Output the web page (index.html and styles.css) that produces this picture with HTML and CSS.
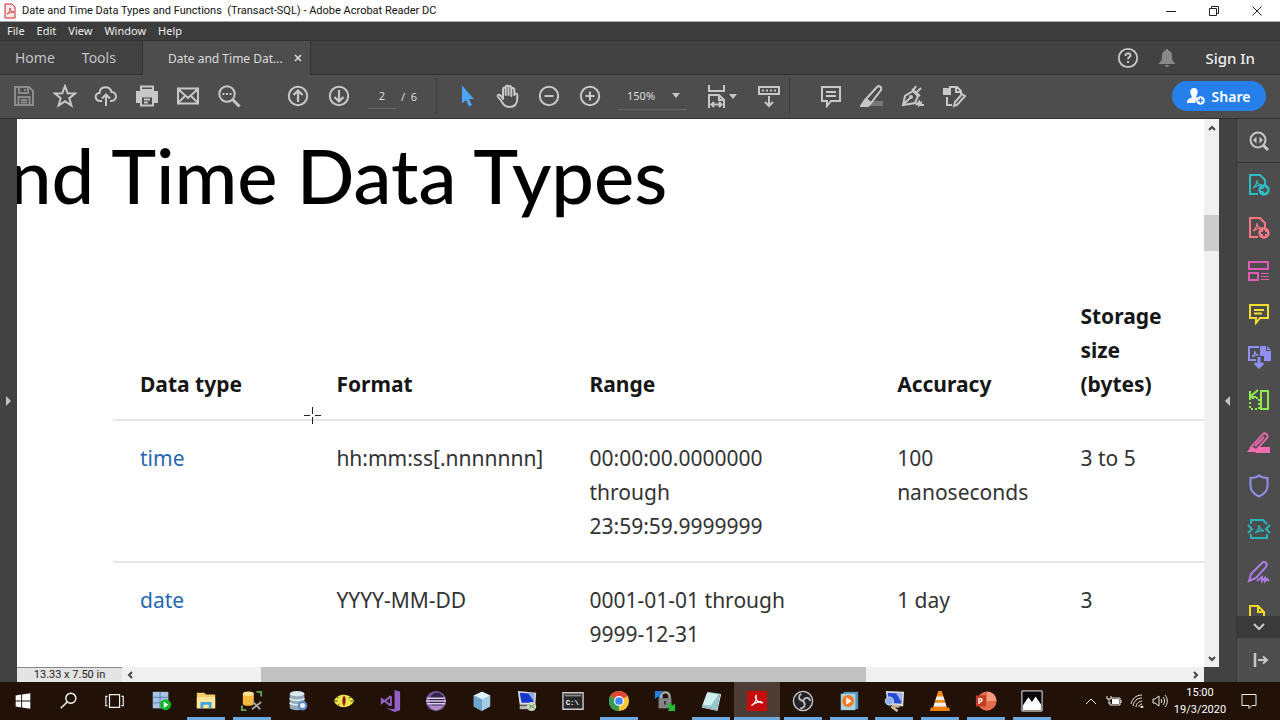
FILE: index.html
```html
<!DOCTYPE html>
<html lang="en">
<head>
  <meta charset="UTF-8">
  <meta name="viewport" content="width=device-width, initial-scale=1.0">
  <title>Date and Time Data Types and Functions (Transact-SQL) - Adobe Acrobat Reader DC</title>
  <link rel="stylesheet" href="styles.css">
</head>
<body>
  <div class="screen">
    <!-- Title bar -->
    <header class="titlebar">
      <svg class="app-icon" width="12" height="16" viewBox="0 0 12 16"><path d="M1 1h7l3 3v11H1z" fill="#fbe9e9" stroke="#c8292c"/><path d="M3 11c3-2 3-4 3-6 0 3 2 4 4 4-3 0-5 1-7 2z" fill="none" stroke="#d93a3a"/></svg>
      <span class="titlebar-text">Date and Time Data Types and Functions&nbsp; (Transact-SQL) - Adobe Acrobat Reader DC</span>
      <div class="window-buttons">
        <button aria-label="Minimize"><svg width="12" height="12" viewBox="0 0 12 12"><path d="M1 6.500h10" /></svg></button>
        <button aria-label="Restore"><svg width="12" height="12" viewBox="0 0 12 12"><path d="M1.500 3.500h7v7h-7zM3.500 3.500v-2h7v7h-2" /></svg></button>
        <button aria-label="Close"><svg width="12" height="12" viewBox="0 0 12 12"><path d="M1.500 1.500l9 9M10.500 1.500l-9 9" /></svg></button>
      </div>
    </header>

    <nav class="menubar">
      <button>File</button>
      <button>Edit</button>
      <button>View</button>
      <button>Window</button>
      <button>Help</button>
    </nav>

    <!-- Tabs -->
    <div class="tabbar">
      <div class="tab-links">
        <button>Home</button>
        <button>Tools</button>
      </div>
      <div class="tab-active">
        <span>Date and Time Dat...</span>
        <button aria-label="Close tab"><svg width="8" height="8" viewBox="0 0 8 8"><path d="M1 1l6 6M7 1L1 7" stroke="#d8d8d8" stroke-width="1.700"/></svg></button>
      </div>
      <div class="account">
        <button aria-label="Help"><svg width="22" height="22" viewBox="0 0 22 22" fill="none" stroke="#c8c8c8"><circle cx="11" cy="11" r="9.200" stroke-width="1.800"/><path d="M8.500 9c0-3.400 5-3.400 5-.6 0 1.700-2.500 1.700-2.500 3.800M11 14v2" stroke-width="2"/></svg></button>
        <button aria-label="Notifications"><svg width="18" height="20" viewBox="0 0 18 20" fill="#888"><path d="M9 1c1 0 1.500.7 1.500 1.600C13 3.400 14 5.500 14 8c0 4 .8 5.400 3 7v1H1v-1c2.200-1.600 3-3 3-7 0-2.500 1-4.600 3.500-5.400C7.500 1.700 8 1 9 1zM7 17h4c0 2.500-4 2.500-4 0z"/></svg></button>
        <button class="sign-in">Sign In</button>
      </div>
    </div>

    <!-- Toolbar -->
    <div class="toolbar">
      <div class="tools tools-file">
        <button aria-label="Save"><svg class="dim" viewBox="0 0 24 24"><path d="M3 3h14l4 4v14H3zM7 3v6h9V3M6.500 21v-8h11v8M13 5v2M9 16h6M9 18.500h6"/></svg></button>
        <button aria-label="Star"><svg viewBox="0 0 24 24"><path d="M12 2l2.700 7.200 7.500.3-5.900 4.700 2.100 7.300-6.400-4.200-6.400 4.200 2.100-7.300-5.900-4.700 7.500-.3z"/></svg></button>
        <button aria-label="Upload"><svg viewBox="0 0 24 24"><path d="M8 17H6.500C.5 17-.2 9.500 5.500 9 6 1.500 16 1.500 17.500 8c6 .2 6 9-.5 9h-1M12 22V11M8 14.500l4-4 4 4" stroke-width="2"/></svg></button>
        <button aria-label="Print"><svg viewBox="0 0 24 24"><path d="M6 6V2.500h12V6z"/><path d="M2 8h20v10H2z" fill="#c8c8c8"/><path d="M6 12.500h12v9H6z" fill="#4d4d4d"/><path d="M9 15.500h6M9 18.500h4"/></svg></button>
        <button aria-label="Mail"><svg viewBox="0 0 24 24"><path d="M2 4.500h20v15H2zM2 5l10 9L22 5M2 19l7.500-7.500M22 19l-7.500-7.500"/></svg></button>
        <button aria-label="Search"><svg viewBox="0 0 24 24"><circle cx="10" cy="10" r="7.700"/><path d="M15.500 15.500l7 7" stroke-width="3"/><path d="M5.500 10h2M9 10h2M12.500 10h2"/></svg></button>
      </div>
      <div class="tools">
        <button aria-label="Previous page"><svg viewBox="0 0 24 24"><circle cx="12" cy="12" r="9.200"/><path d="M12 18V7M7.500 11L12 6.500l4.500 4.500" stroke-width="2.200"/></svg></button>
        <button aria-label="Next page"><svg viewBox="0 0 24 24"><circle cx="12" cy="12" r="9.200"/><path d="M12 6v11M7.500 13l4.500 4.500 4.500-4.500" stroke-width="2.200"/></svg></button>
      </div>
      <label class="page-number"><input type="text" value="2" aria-label="Page number"> <span>/&nbsp; 6</span></label>
      <div class="tools tools-view">
        <button aria-label="Select"><svg viewBox="0 0 24 24"><path d="M7 1.500v18l4-3.500 3 6.500 3-1.500-3-6h5z" fill="#4ea4f6" stroke="none"/></svg></button>
        <button aria-label="Hand"><svg viewBox="0 0 24 24" stroke-linejoin="round"><path d="M7 15V5c0-2 2.700-2 2.700 0v6V3c0-2 2.800-2 2.800 0v8V3.500c0-2 2.800-2 2.800 0V12 5.500c0-2 3-2 3 0V11c.3-2 3-2 3 0v3c0 6-3 9-8 9-4.500 0-6-2.500-8-6l-3.200-4c-1-2 1-3 2.500-1.500z"/></svg></button>
        <button aria-label="Zoom out"><svg viewBox="0 0 24 24"><circle cx="12" cy="12" r="9.200"/><path d="M7.500 12h9"/></svg></button>
        <button aria-label="Zoom in"><svg viewBox="0 0 24 24"><circle cx="12" cy="12" r="9.200"/><path d="M7.500 12h9M12 7.500v9"/></svg></button>
      </div>
      <div class="zoom-level">
        <select aria-label="Zoom level"><option>150%</option></select>
        <svg class="caret" viewBox="0 0 8 5"><path d="M0 0h8L4 5z"/></svg>
      </div>
      <div class="tools tools-page">
        <button aria-label="Fit width"><svg viewBox="0 0 24 24"><path d="M4 1v6h15V1M4 24V11h10l5 5v8M14 11v5h5M7 20.500h9M9 18l-2.500 2.500L9 23M14 18l2.500 2.500L14 23"/></svg><svg class="caret" viewBox="0 0 8 5"><path d="M0 0h8L4 5z"/></svg></button>
        <button aria-label="Reading mode"><svg viewBox="0 0 24 24"><path d="M2 3h20v7H2zM12 12v10M8 18l4 4 4-4" stroke-width="2"/><path d="M5 6.500h14" stroke-dasharray="2 2"/></svg></button>
      </div>
      <div class="tools tools-comment">
        <button aria-label="Comment"><svg viewBox="0 0 24 24"><path d="M3 3h18v14h-9l-4 5v-5H3zM7 8h10M7 12h10"/></svg></button>
        <button aria-label="Highlight"><svg viewBox="0 0 24 24"><path d="M12 17h11v5H10z" fill="#777" stroke="none"/><path d="M6 15L17 3c2-2 5 0 4 3L11 19z"/><path d="M5 16l5 4-2 2H1z" fill="#c8c8c8"/></svg></button>
        <button aria-label="Sign"><svg viewBox="0 0 24 24"><path d="M2 21L4 12l8-5 5 5-3 7zM2 21l7-7M12 7l3-5M11 5l8 7M16 8l4-4M15 21l3-3v3l2-2v2h3"/><circle cx="10" cy="13" r="1"/></svg></button>
        <button aria-label="Edit page"><svg viewBox="0 0 24 24"><path d="M7 3h8l4 4v3M14 3v5h5M5 13v8h5M12 22l1-4 7-8 3 2-8 9z"/><path d="M2 5h6v5H2z" fill="#c8c8c8"/></svg></button>
      </div>
      <button class="share">
        <svg width="20" height="20" viewBox="0 0 20 20" fill="#fff"><path d="M8 2c5 0 4 6 2.300 8v1.500L12 12c-2 1-3 3-2.500 5H1c0-4 2-4 4.700-5.500V10C4 8 3 2 8 2z"/><circle cx="14.500" cy="14.500" r="4.300"/><path d="M14.500 12v5M12 14.500h5" stroke="#2680eb" stroke-width="1.300"/></svg>
        Share
      </button>
    </div>

    <!-- Document and side panels -->
    <div class="workspace">
      <button class="rail rail-left" aria-label="Open navigation pane"><svg width="5" height="10" viewBox="0 0 5 10"><path d="M0 0l5 5-5 5z"/></svg></button>
      <div class="viewer">
        <main class="document">
          <h1>nd Time Data Types</h1>
          <table>
            <thead>
              <tr>
                <th class="col-type">Data type</th>
                <th class="col-format">Format</th>
                <th class="col-range">Range</th>
                <th class="col-accuracy">Accuracy</th>
                <th class="col-size">Storage<br>size<br>(bytes)</th>
              </tr>
            </thead>
            <tbody>
              <tr>
                <td><a href="#">time</a></td>
                <td>hh:mm:ss[.nnnnnnn]</td>
                <td>00:00:00.0000000<br>through<br>23:59:59.9999999</td>
                <td>100<br>nanoseconds</td>
                <td>3 to 5</td>
              </tr>
              <tr>
                <td><a href="#">date</a></td>
                <td>YYYY-MM-DD</td>
                <td>0001-01-01 through<br>9999-12-31</td>
                <td>1 day</td>
                <td>3</td>
              </tr>
            </tbody>
          </table>
          <svg class="crosshair" width="17" height="17" viewBox="0 0 17 17"><path d="M8.500 0v7M8.500 10v7M0 8.500h6M11 8.500h6"/></svg>
        </main>
        <div class="vscroll">
          <button aria-label="Scroll up"><svg width="8" height="6" viewBox="0 0 8 6"><path d="M1 5l3-3 3 3"/></svg></button>
          <div class="vthumb"></div>
          <button aria-label="Scroll down"><svg width="8" height="6" viewBox="0 0 8 6"><path d="M1 1l3 3 3-3"/></svg></button>
        </div>
        <div class="bottombar">
          <span class="page-size">13.33 x 7.50 in</span>
          <button aria-label="Scroll left"><svg width="6" height="8" viewBox="0 0 6 8"><path d="M5 1L2 4l3 3"/></svg></button>
          <div class="htrack"><div class="hthumb"></div></div>
          <button aria-label="Scroll right"><svg width="6" height="8" viewBox="0 0 6 8"><path d="M1 1l3 3-3 3"/></svg></button>
        </div>
      </div>
      <button class="rail rail-right" aria-label="Collapse tools pane"><svg width="5" height="10" viewBox="0 0 5 10"><path d="M5 0L0 5l5 5z"/></svg></button>
      <aside class="sidepanel">
        <div class="side-tools">
          <button class="side-search" aria-label="Find tool"><svg viewBox="0 0 24 24" stroke="#c8c8c8"><circle cx="11" cy="11" r="7.500"/><path d="M16.500 16.500l4.500 4.500" stroke-width="3"/><path d="M9.500 7.500v7L6 11zM12.500 7.500v7L16 11z" fill="#c8c8c8" stroke="none"/></svg></button>
          <button aria-label="Export PDF"><svg viewBox="0 0 24 24" stroke="#2dbdc4"><path d="M11 21H3V2h10l5 5v5"/><path d="M6 15c3-2 4-5 4-8 0 4 2 5 5 5-4 0-6 1-9 3" stroke-width="1.200"/><circle cx="17" cy="17" r="5.700" fill="#2dbdc4" stroke="none"/><path d="M14 17h5M17 14.500l2.500 2.500-2.500 2.500" stroke="#4d4d4d"/></svg></button>
          <button aria-label="Create PDF"><svg viewBox="0 0 24 24" stroke="#fa7883"><path d="M11 21H3V2h10l5 5v5"/><path d="M6 15c3-2 4-5 4-8 0 4 2 5 5 5-4 0-6 1-9 3" stroke-width="1.200"/><circle cx="17" cy="17" r="5.700" fill="#fa7883" stroke="none"/><path d="M14 17h6M17 14v6" stroke="#4d4d4d"/></svg></button>
          <button aria-label="Organize pages"><svg viewBox="0 0 24 24" stroke="#e05bb5"><path d="M2 3h19v7H2zM2 14h9v7H2z"/><path d="M14 14.500h8M14 17.500h8M14 20.500h8" stroke-width="1"/></svg></button>
          <button aria-label="Comment"><svg viewBox="0 0 24 24" stroke="#f4dc33"><path d="M3 3h18v13h-8l-4 5v-5H3zM7 8h10M7 11.500h8"/></svg></button>
          <button aria-label="Combine files"><svg viewBox="0 0 24 24" stroke="#918ff5"><path d="M9 15H2V2h10"/><path d="M5 12c3-2 3-4 3-6 0 3 1 4 4 4-4 0-5 1-7 2" stroke-width="1.200"/><path d="M13 1h6v5h5v10h-7v-5h-4zM20 1l4 4h-4z" fill="#918ff5" stroke="none"/><path d="M12 12v10M8 18l4 4 4-4" stroke-width="3"/></svg></button>
          <button aria-label="Compress"><svg viewBox="0 0 24 24" stroke="#8ee84e"><path d="M14 3h7v18h-7z"/><path d="M3 10v11h9V10z" stroke-dasharray="2 2"/><path d="M11 2L4 8M3 3v6h6"/></svg></button>
          <button aria-label="Redact"><svg viewBox="0 0 24 24" stroke="#f36bb1"><path d="M4 16L16 3c2-2 6 1 4 4L9 19zM8 15L17 6" stroke-width="1.800"/><path d="M2 20l2-3 5 3zM12 17h10v4H10z" fill="#f36bb1"/></svg></button>
          <button aria-label="Protect"><svg viewBox="0 0 24 24" stroke="#9290f0"><path d="M12 1.500c3 2.500 5 2.500 8.500 2.500v8c0 5-3 8-8.500 10.500C6.500 20 3.500 17 3.500 12V4C7 4 9 4 12 1.500z"/></svg></button>
          <button aria-label="Optimize PDF"><svg viewBox="0 0 24 24" stroke="#29b5b8"><path d="M4 7V3h12l4 4M4 17v4h16v-4M1 8l4 4-4 4M23 8l-4 4 4 4"/><path d="M8 16c3-2 4-5 4-8 0 3 2 5 5 6-4-1-6 0-9 2" stroke-width="1.400"/></svg></button>
          <button aria-label="Fill and sign"><svg viewBox="0 0 24 24" stroke="#ad7de5"><path d="M4 14L15 3c3-3 6 1 4 4L9 18l-7 3zM10 21l5-4v4l3-3v3l2-2 2 2"/></svg></button>
          <button aria-label="More tools"><svg viewBox="0 0 24 24" stroke="#f0d82b"><path d="M3 22V3h8l6 6v4M11 3v6h6M14 15h7"/></svg></button>
        </div>
        <button class="side-more" aria-label="More"><svg width="12" height="8" viewBox="0 0 12 8"><path d="M1 1l5 5 5-5" stroke="#c8c8c8" stroke-width="2"/></svg></button>
        <button class="side-hide" aria-label="Hide panel"><svg viewBox="0 0 24 24" stroke="#c8c8c8"><path d="M8 5v14" stroke-width="2.500"/><path d="M11 12h9M16 8.500l4 3.500-4 3.500"/></svg></button>
      </aside>
    </div>

    <!-- Windows taskbar -->
    <footer class="taskbar">
      <div class="apps">
        <button aria-label="Start"><svg viewBox="0 0 24 24" fill="#fff"><path d="M4 6l6-1v6.500H4zM11 5l9-1.500v8h-9zM4 12.500h6V19l-6-1zM11 12.500h9v8L11 19z"/></svg></button>
        <button aria-label="Search"><svg viewBox="0 0 24 24" fill="none" stroke="#fff" stroke-width="1.500"><circle cx="14" cy="9" r="5.500"/><path d="M10 13L3 20"/></svg></button>
        <button aria-label="Task view"><svg viewBox="0 0 24 24" fill="none" stroke="#eee" stroke-width="1.300"><path d="M6 5h11v14H6zM4 7H2v10h2M19 7h2v10h-2"/></svg></button>
        <button aria-label="Server profiler"><svg viewBox="0 0 24 24"><path d="M3 2h17v18H3z" fill="#a9c4e6"/><path d="M3 8h17M3 14h17M11 2v18" stroke="#5279ac"/><circle cx="17" cy="16" r="6" fill="#12b425"/><path d="M15 12.500v7l5-3.500z" fill="#fff"/></svg></button>
        <button class="open" aria-label="File Explorer"><svg viewBox="0 0 24 24"><path d="M2 3h8l2 2h10v15H2z" fill="#f4cf69"/><path d="M2 8h20v12H2z" fill="#ffe69a"/><path d="M6 20v-7h12v7h-3v-4H9v4z" fill="#3ea5dd"/></svg></button>
        <button class="open" aria-label="SQL Server Management Studio"><svg viewBox="0 0 24 24"><path d="M2 4v11c0 3 12 3 12 0V4z" fill="#f6b83b"/><ellipse cx="8" cy="4" rx="6" ry="2.500" fill="#ffe494"/><path d="M17 2h5v5M1 17v5h5" fill="none" stroke="#62a65c" stroke-width="2"/><path d="M12 21l10-8M13 13l8 8" stroke="#a5a5a5" stroke-width="2"/></svg></button>
        <button aria-label="Database configuration"><svg viewBox="0 0 24 24"><path d="M3 4v15c0 4 16 4 16 0V4z" fill="#94a9b6"/><ellipse cx="11" cy="4" rx="8" ry="3" fill="#dce8ee"/><path d="M3 9c2 3 14 3 16 0M3 14c2 3 14 3 16 0" fill="none" stroke="#dce8ee" stroke-width="2"/><circle cx="17" cy="17" r="4" fill="#eee" stroke="#5c8cc6" stroke-width="2.500"/></svg></button>
        <button aria-label="Eye viewer"><svg viewBox="0 0 24 24"><path d="M1 12C5 3 18 3 23 12 18 21 5 21 1 12z" fill="#ece84b"/><path d="M3 7l3 2M1 12h4M4 18l3-3M20 7l-3 2M22 12h-3" stroke="#3d4118"/><path d="M12 6c3 3 2 9 0 12-3-4-2-9 0-12z" fill="#b71818"/><path d="M12 8v6" stroke="#221"/></svg></button>
        <button aria-label="Visual Studio"><svg viewBox="0 0 24 24"><path d="M17 0l6 2v20l-6 2-9-4 9 1z" fill="#9362c7"/><path d="M2 8l4 3 6-5 2 1v10l-2 1-6-5-4 3z" fill="#9362c7"/><path d="M12 9v6l-4-3z" fill="#211106"/></svg></button>
        <button aria-label="Eclipse"><svg viewBox="0 0 24 24"><circle cx="12" cy="12" r="11" fill="#75549b"/><circle cx="13" cy="11" r="8" fill="#33234f"/><path d="M2 9h20M1 12h22M2 15h20" stroke="#ddd0e7" stroke-width="1.500"/><path d="M4 17h16c-4 7-12 7-16 0z" fill="#b28cc9"/></svg></button>
        <button aria-label="NetBeans"><svg viewBox="0 0 24 24"><path d="M12 2l9 4v12l-9 5-9-5V6z" fill="#a5cce5"/><path d="M3 6l9 4 9-4-9-4z" fill="#e0f1fa"/><path d="M3 6l9 4v13l-9-5z" fill="#6ca4cd"/></svg></button>
        <button aria-label="Remote desktop"><svg viewBox="0 0 24 24"><path d="M2 1l20 2-1 13H4z" fill="#ddd"/><path d="M4 3l16 1-1 10H6z" fill="#1637cb"/><path d="M13 3l7 1-1 8z" fill="#8daaf0"/><path d="M4 17h11v4H4z" fill="#b8b8b8"/><circle cx="17" cy="18" r="5" fill="#c9ddbd"/><path d="M14 16l3 2-3 2M20 16l-3 2 3 2" fill="none" stroke="#557b42"/></svg></button>
        <button aria-label="Command Prompt"><svg viewBox="0 0 24 24"><path d="M1 3h22v18H1z" fill="#282828" stroke="#ccc" stroke-width="1.500"/><path d="M3 5h18v2H3z" fill="#888"/><text x="4" y="16" class="prompt">C:\</text></svg></button>
        <button class="open" aria-label="Chrome"><svg viewBox="0 0 24 24"><circle cx="12" cy="12" r="11" fill="#f7ca35"/><path d="M12 12L2.500 6.500a11 11 0 0 1 19 0z" fill="#df4636"/><path d="M2.500 6.500L12 12v11A11 11 0 0 1 2.500 6.500z" fill="#329b55"/><circle cx="12" cy="12" r="5.500" fill="#fff"/><circle cx="12" cy="12" r="4.200" fill="#4285f4"/></svg></button>
        <button aria-label="WinSCP"><svg viewBox="0 0 24 24"><path d="M1 1h9L7 4l3 3-3 3-3-3-3 3z" fill="#277ee0"/><path d="M8 10V7c0-6 9-6 9 0v3" fill="none" stroke="#aaa" stroke-width="2.500"/><path d="M5 9h14v11H5z" fill="#858585"/><path d="M12 12v4" stroke="#333" stroke-width="2"/><path d="M23 23h-8l2-3-3-3 3-3 3 3 3-2z" fill="#23bc35"/></svg></button>
        <button class="open" aria-label="Notepad"><svg viewBox="0 0 24 24"><path d="M8 2l14 2-4 18-16-4z" fill="#91c9ce"/><path d="M8 3l12 2-8 12-9-1z" fill="#d4eeee"/><path d="M22 4l1 1-4 18-17-4v-1l16 4z" fill="#e5e8e3"/></svg></button>
        <button class="open current" aria-label="Acrobat Reader"><svg viewBox="0 0 24 24"><path d="M1 1h22v22H1z" fill="#c60c0c"/><path d="M6 17c4-3 6-7 5-11-2 2 1 8 7 8-1-3-9 0-12 3z" fill="none" stroke="#fff" stroke-width="1.300"/></svg></button>
        <button class="open" aria-label="OBS Studio"><svg viewBox="0 0 24 24"><circle cx="12" cy="12" r="10.500" fill="#242229" stroke="#c9c9cd" stroke-width="1.500"/><path d="M12 12c-6-1-5-6-2-8M12 12c2-5 7-4 8 0M12 12c4 4 1 8-3 8" fill="none" stroke="#bbb" stroke-width="2"/></svg></button>
        <button class="open" aria-label="Media Player"><svg viewBox="0 0 24 24"><path d="M6 2h16v19H6z" fill="#5793b3"/><path d="M3 4h16v18H3z" fill="#a9d2e4"/><circle cx="11" cy="12" r="6.500" fill="#f27b1f"/><path d="M9 8v8l6-4z" fill="#fff"/></svg></button>
        <button class="open" aria-label="Remote viewer"><svg viewBox="0 0 24 24"><path d="M3 1l20 1-1 16-17-2z" fill="#ddd"/><path d="M5 3l16 1-1 11-14-1z" fill="#2548d5"/><path d="M14 3l7 1-1 9z" fill="#a1b5ee"/><circle cx="7" cy="12" r="4.500" fill="#8eb0ec" stroke="#d4e1f8"/><path d="M9 18l7 5M10 17l8 1" stroke="#ccb59c" stroke-width="3"/></svg></button>
        <button class="open" aria-label="VLC"><svg viewBox="0 0 24 24"><path d="M10 1h4l6 20H4z" fill="#f28b18"/><path d="M8.500 7h7l1.500 4H7zM6 14h12l1 4H5z" fill="#eee"/><path d="M2 19h20l1 4H1z" fill="#ed7e12"/></svg></button>
        <button class="open" aria-label="PowerPoint"><svg viewBox="0 0 24 24"><circle cx="13" cy="12" r="10.500" fill="#e66b4c"/><path d="M13 1.500a10.500 10.500 0 0 1 10.500 10.500H13z" fill="#f49a7d"/><path d="M1 6h11v12H1z" fill="#c13b22"/><text x="3" y="15" class="letter">P</text></svg></button>
        <button class="open" aria-label="Photos"><svg viewBox="0 0 24 24"><path d="M1 1h22v22H1z" fill="#080808" stroke="#fff"/><path d="M2 17l6-9 4 5 4-6 6 9v6H2z" fill="#fff"/></svg></button>
      </div>
      <div class="tray">
        <button aria-label="Hidden icons"><svg width="12" height="8" viewBox="0 0 12 8"><path d="M1 7l5-5 5 5"/></svg></button>
        <button aria-label="Battery"><svg width="16" height="12" viewBox="0 0 16 12"><path d="M5 3h9v7H4V7M1 1v3h4V1M3 4v5M15 5v3"/><path d="M6 4h7v5H6z" fill="#fff" stroke="none"/></svg></button>
        <button aria-label="Wi-Fi"><svg width="14" height="14" viewBox="0 0 14 14"><path d="M1 10C2 5 6 1 12 1M3 12c1-5 4-8 9-8M6 13c0-3 3-6 6-6M9 13c0-2 1-3 3-3"/><circle cx="12" cy="13" r="1" fill="#fff"/></svg></button>
        <button aria-label="Volume"><svg width="16" height="14" viewBox="0 0 16 14"><path d="M1 5h2l4-3v10L3 9H1zM9 5c1 1 1 3 0 4M11 3c2 2 2 6 0 8M13 1c3 3 3 9 0 12"/></svg></button>
        <div class="clock"><span>15:00</span><span>19/3/2020</span></div>
        <button class="notifications" aria-label="Notifications"><svg width="16" height="16" viewBox="0 0 16 16"><path d="M1 1.500h14v11h-4l-3 3v-3H1z"/></svg></button>
      </div>
    </footer>
  </div>
</body>
</html>
```
FILE: styles.css
```css
:root {
  --chrome: #424242;
  --panel: #4d4d4d;
  --line: #303030;
  --icon: #c8c8c8;
}

* {box-sizing: border-box;}

body {
  margin: 0;
  font-family: "Noto Sans", "Open Sans", sans-serif;
  font-size: 12px;
}

button {
  display: flex;
  align-items: center;
  justify-content: center;
  padding: 0;
  border: 0;
  background: none;
  color: inherit;
  font: inherit;
}

svg {flex-shrink: 0;}

.screen {
  display: flex;
  flex-direction: column;
  height: 100vh;
  overflow: hidden;
}

/* Title bar */
.titlebar {
  display: flex;
  align-items: center;
  height: 22px;
  padding-right: 2px;
  padding-left: 4px;
  background: #fff;
  border-bottom: 1px solid #aaa;
  color: #111;
  font-family: Roboto, "Open Sans", sans-serif;
  font-size: 11px;
}
.titlebar-text {
  flex: 1;
  margin-left: 6px;
}
.window-buttons {display: flex;}
.window-buttons button {width: 43px; height: 20px;}
.window-buttons svg {fill: none; stroke: #222;}

.menubar {
  display: flex;
  align-items: center;
  gap: 12px;
  height: 19px;
  padding: 0 0 2px 7px;
  background: #3c3c3c;
  border-bottom: 1px solid var(--line);
  color: #eee;
  font-size: 11px;
}

/* Tabs */
.tabbar {
  display: flex;
  height: 34px;
  background: var(--chrome);
  color: #c4c4c4;
  font-size: 14px;
}
.tab-links {
  display: flex;
  gap: 27px;
  width: 143px;
  padding-left: 15px;
  border-right: 1px solid var(--line);
  border-bottom: 1px solid var(--line);
}
.tab-active {
  display: flex;
  align-items: center;
  justify-content: space-between;
  width: 168px;
  padding: 0 8px 0 25px;
  background: var(--panel);
  border-right: 1px solid var(--line);
  color: #dcdcdc;
  font-size: 12px;
}
.account {
  display: flex;
  flex: 1;
  align-items: center;
  justify-content: flex-end;
  gap: 19px;
  padding-right: 25px;
  border-bottom: 1px solid var(--line);
}
.sign-in {
  margin-left: 10px;
  color: #eee;
  font-size: 15px;
  font-weight: 500;
}

/* Toolbar */
.toolbar {
  display: flex;
  align-items: center;
  height: 44px;
  padding: 0 14px 1px 3px;
  background: var(--panel);
  border-bottom: 1px solid var(--line);
  color: #ddd;
  font-size: 11px;
}
.tools {display: flex;}
.tools button {width: 41px; height: 36px;}
.tools svg {
  width: 24px;
  height: 24px;
  fill: none;
  stroke: var(--icon);
  stroke-width: 2;
}
.tools .dim {stroke: #8c8c8c;}
.tools-file {margin-right: 28px;}
.tools-view {
  padding-left: 9px;
  border-left: 1px solid #3c3c3c;
}
.page-number {
  display: flex;
  align-items: center;
  gap: 5px;
  width: 77px;
  padding-left: 9px;
}
.page-number input {
  width: 28px;
  height: 26px;
  padding: 0;
  border: 0;
  border-bottom: 1px solid #686868;
  background: none;
  color: inherit;
  font: inherit;
  text-align: center;
}
.tools .caret, .caret {
  width: 8px;
  height: 5px;
  fill: var(--icon);
  stroke: none;
}
.zoom-level {
  display: flex;
  align-items: center;
  width: 68px;
  padding-right: 7px;
  margin-left: 9px;
  border-bottom: 1px solid #686868;
}
.zoom-level select {
  flex: 1;
  min-width: 0;
  height: 26px;
  padding: 0 0 0 8px;
  border: 0;
  background: none;
  color: inherit;
  font: inherit;
  appearance: none;
}
.tools-page {
  gap: 7px;
  margin-left: 13px;
}
.tools-comment {
  padding-left: 20px;
  border-left: 1px solid #3c3c3c;
}
.share {
  gap: 6px;
  width: 94px;
  height: 30px;
  padding-right: 2px;
  margin-left: auto;
  border-radius: 15px;
  background: #2680eb;
  color: #fff;
  font-size: 14px;
  font-weight: 600;
}

/* Document area */
.workspace {
  display: flex;
  flex: 1;
  min-height: 0;
}
.rail {
  width: 17px;
  background: var(--chrome);
}
.rail svg {fill: #c4c4c4;}
.rail-right {
  width: 18px;
  border-right: 1px solid #383838;
}
.viewer {
  display: grid;
  flex: 1;
  grid-template-columns: 1fr 15px;
  grid-template-rows: 1fr 15px;
  min-width: 0;
  background: var(--chrome);
}
.document {
  position: relative;
  overflow: hidden;
  background: #fff;
  color: #333;
}
.document h1 {
  height: 180px;
  margin: 0 0 0 -8px;
  color: #000;
  font-family: Lato, "Open Sans", sans-serif;
  font-size: 76px;
  font-weight: 500;
  line-height: 112px;
  white-space: nowrap;
}
.document table {
  width: calc(100% - 96px);
  margin-left: 96px;
  border-collapse: collapse;
  table-layout: fixed;
  font-size: 21px;
  line-height: 34px;
}
.document th, .document td {
  padding: 20px 0 18px 27px;
  text-align: left;
  vertical-align: top;
  white-space: nowrap;
}
.document th {
  padding: 0 0 18px 27px;
  color: #171717;
  font-weight: 700;
  vertical-align: bottom;
}
.document tr {border-bottom: 2px solid #e6e6e6;}
.document a {
  color: #2767b0;
  text-decoration: none;
}
.col-type {width: 18%;}
.col-format {width: 23.2%;}
.col-range {width: 28.2%;}
.col-accuracy {width: 16.8%;}
.crosshair {
  position: absolute;
  top: 288px;
  left: 287px;
  stroke: #222;
}

.vscroll {
  display: flex;
  flex-direction: column;
  background: #f0f0f0;
}
.vscroll button {height: 17px;}
.vscroll svg, .bottombar svg {
  fill: none;
  stroke: #444;
  stroke-width: 2;
}
.vthumb {
  height: 36px;
  margin: 79px 0 auto;
  background: #cdcdcd;
}
.bottombar {
  display: flex;
  background: #f0f0f0;
}
.bottombar button {width: 16px;}
.page-size {
  width: 105px;
  border-top: 1px solid #888;
  background: #e4e4e4;
  color: #222;
  font-family: Roboto, sans-serif;
  font-size: 11px;
  line-height: 14px;
  text-align: center;
}
.htrack {flex: 1;}
.hthumb {
  width: 57.6%;
  height: 100%;
  margin-left: 11.7%;
  background: #c1c1c1;
}

/* Tool icons on the right */
.sidepanel {
  display: flex;
  flex-direction: column;
  width: 43px;
  background: var(--panel);
}
.sidepanel svg {fill: none;}
.side-tools {
  flex: 1;
  min-height: 0;
  overflow: hidden;
}
.side-tools button {width: 43px; height: 43px;}
.side-tools svg, .side-hide svg {
  width: 24px;
  height: 24px;
  stroke-width: 2;
}
.side-tools .side-search {
  height: 44px;
  border-bottom: 1px solid #333;
}
.side-more {
  height: 22px;
  background: #3a3a3a;
}
.side-hide {height: 44px;}

/* Taskbar */
.taskbar {
  display: flex;
  height: 38px;
  background: #211106;
  color: #fff;
}
.apps {
  display: grid;
  flex: 1;
  grid-template-columns: repeat(23, 1fr);
}
.apps svg {width: 22px; height: 22px;}
.apps .open {
  background: linear-gradient(#6ba9df, #6ba9df) center bottom / 38px 3px no-repeat;
}
.apps .current {
  background-color: #4d3d35;
  background-size: 100% 3px;
}
.prompt, .letter {
  fill: #fff;
  font-family: "Liberation Mono", monospace;
  font-size: 8px;
  font-weight: 700;
}
.letter {font-family: "Noto Sans", sans-serif; font-size: 9px;}
.tray {
  display: flex;
  align-items: center;
  width: 225px;
  padding-left: 24px;
}
.tray button {width: 23px; height: 36px;}
.tray svg {fill: none; stroke: #eee;}
.clock {
  display: flex;
  flex-direction: column;
  align-items: center;
  width: 58px;
  font-family: Roboto, "Open Sans", sans-serif;
  font-size: 11px;
  line-height: 17px;
}
.tray .notifications {width: 40px;}
```
